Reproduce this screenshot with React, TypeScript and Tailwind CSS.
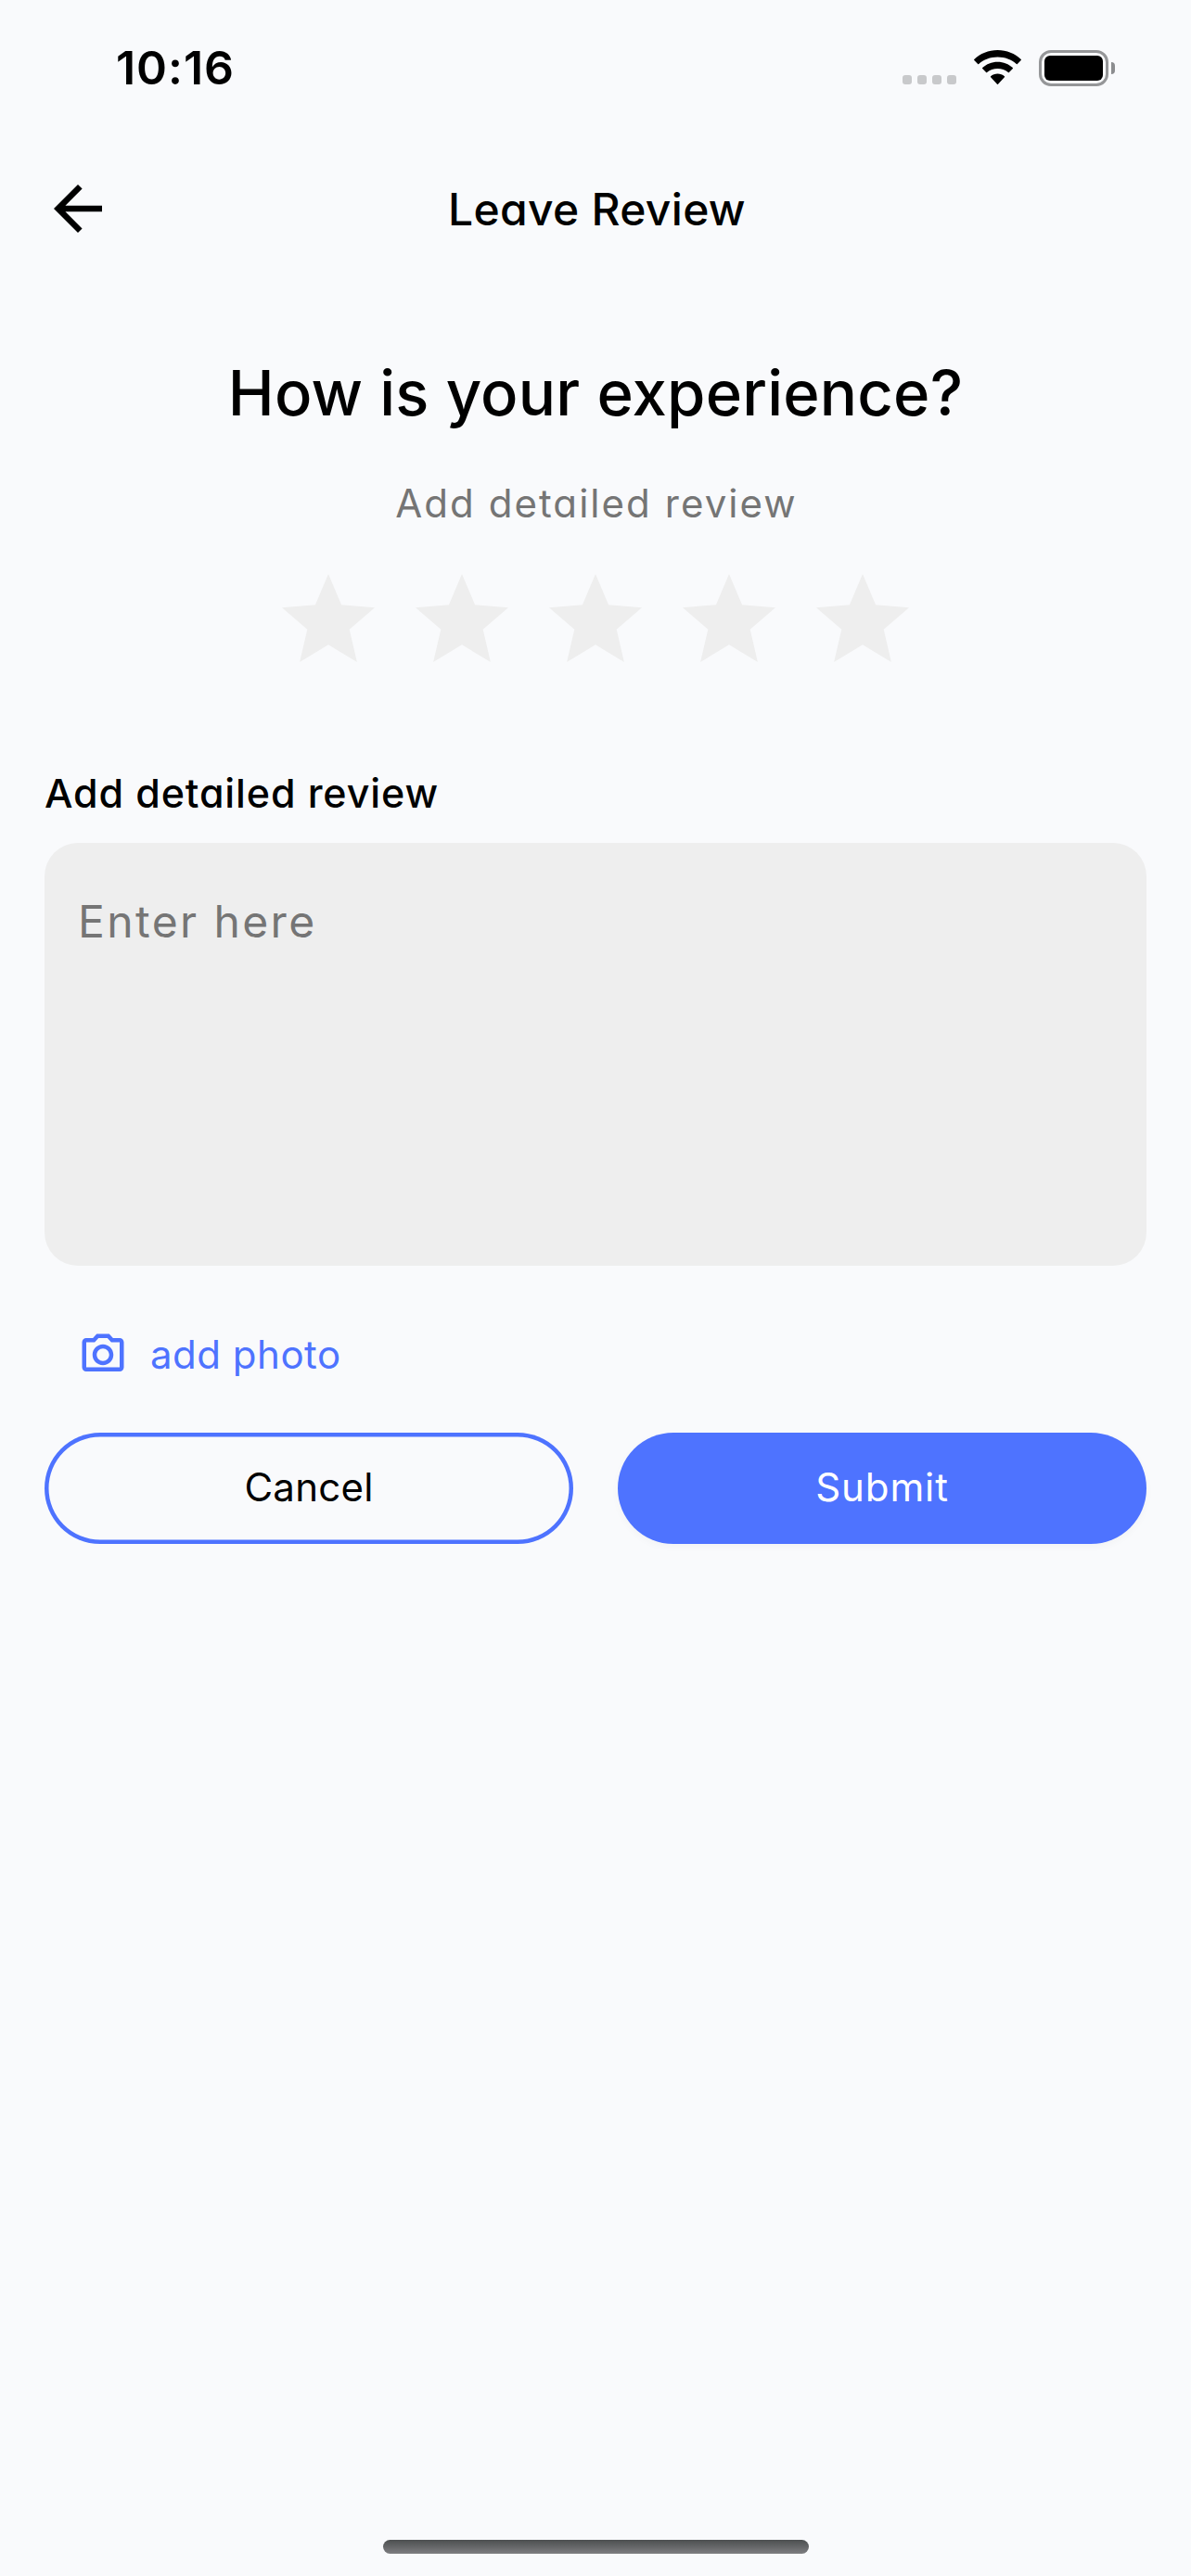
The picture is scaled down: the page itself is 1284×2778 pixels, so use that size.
import { MdArrowBack, MdOutlinePhotoCamera, MdStar } from 'react-icons/md';

const stars = [1, 2, 3, 4, 5];

function StatusBar() {
  return (
    <div className="flex h-[146px] items-center justify-between pr-[82px] pl-[125px]">
      <span className="text-[50px] leading-[60px] font-semibold tracking-[0.95px]">10:16</span>
      <div className="flex h-[39px] items-start">
        <div className="mt-[27px] flex gap-[6px]">
          {[0, 1, 2, 3].map((i) => (
            <span key={i} className="size-[10px] rounded-[3px] bg-[#c8c9cb]" />
          ))}
        </div>
        <svg className="ml-[19px] h-[37px] w-[51px]" viewBox="0 0 51 37">
          <path d="M25.5 0C35.3 0 44.2 3.8 50.7 10Q51.2 10.5 50.7 11L46.8 15Q46.3 15.5 45.8 15C40.5 10.1 33.3 7.4 25.5 7.4S10.5 10.1 5.2 15Q4.7 15.5 4.2 15L.3 11Q-.2 10.5 .3 10C6.8 3.8 15.7 0 25.5 0Z" />
          <path d="M25.5 12.7C31.8 12.7 37.5 15 41.8 19Q42.3 19.5 41.8 20L37.9 24Q37.4 24.5 36.9 24C33.9 21.5 29.9 20 25.5 20S17.1 21.5 14.1 24Q13.6 24.5 13.1 24L9.2 20Q8.7 19.5 9.2 19C13.5 15 19.2 12.7 25.5 12.7Z" />
          <path d="M25.5 25.6C28.3 25.6 30.9 26.5 32.9 28.2Q33.4 28.7 32.9 29.2L26 36.7Q25.5 37.2 25 36.7L18.1 29.2Q17.6 28.7 18.1 28.2C20.1 26.5 22.7 25.6 25.5 25.6Z" />
        </svg>
        <div className="ml-[19px] h-[39px] w-[75px] rounded-[13px] border-3 border-[#959698] p-[3px]">
          <div className="h-full rounded-[6px] bg-black" />
        </div>
        <span className="mt-[13px] ml-[3px] h-[13px] w-[4px] rounded-r-full bg-[#8c8d8f]" />
      </div>
    </div>
  );
}

export default function App() {
  return (
    <div className="relative flex h-[2778px] w-[1284px] flex-col overflow-hidden bg-[#f9fafc] font-['Inter',sans-serif] text-black">
      <StatusBar />

      <header className="grid h-[160px] grid-cols-[1fr_auto_1fr] items-center px-[45px]">
        <button className="mb-[3px] size-[78px]" aria-label="Back">
          <MdArrowBack className="size-[78px]" />
        </button>
        <h1 className="pl-[3px] text-[48px] leading-[60px] font-medium tracking-[0.3px] [font-feature-settings:'cv11']">
          Leave Review
        </h1>
      </header>

      <main className="flex flex-col px-12 [font-feature-settings:'cv11']">
        <h2 className="mt-[68px] text-center text-[67px] leading-[100px] font-medium tracking-[0.19px]">
          How is your experience?
        </h2>
        <p className="mt-[39px] pl-[2px] text-center text-[42px] leading-[60px] tracking-[2.05px] text-[#757575]">
          Add detailed review
        </p>
        <div className="mt-9 flex justify-center gap-6 text-[#eeeeee]">
          {stars.map((n) => (
            <MdStar key={n} className="size-[120px]" />
          ))}
        </div>

        <label className="mt-24 text-[43px] leading-[60px] font-medium tracking-[0.87px]">
          Add detailed review
        </label>
        <div className="mt-6 h-[456px] rounded-[36px] bg-[#eeeeee] px-9 pt-[55px] text-[48px] leading-[60px] tracking-[2.4px] text-[#757575]">
          Enter here
        </div>

        <div className="mt-[69px] flex h-[54px] items-center pl-9 text-[#4e73ff]">
          <MdOutlinePhotoCamera className="size-[54px]" />
          <span className="ml-6 text-[42px] leading-[54px] tracking-[0.5px] [font-feature-settings:normal]">
            add photo
          </span>
        </div>

        <div className="mt-[57px] grid grid-cols-2 gap-12 text-[42px] leading-[60px] [font-feature-settings:normal]">
          <button className="h-[120px] rounded-full pb-[2px] tracking-[0.24px] shadow-[inset_0_0_0_4.5px_#4e73ff]">
            Cancel
          </button>
          <button className="h-[120px] rounded-full bg-[#4e73ff] pb-[2px] tracking-[0.9px] text-white shadow-[0_3px_9px_rgba(0,0,0,0.03)]">
            Submit
          </button>
        </div>
      </main>

      <div className="mx-auto mt-auto mb-6 h-[15px] w-[459px] rounded-full bg-linear-to-b from-[#4c4f50] to-[#7e7e81]" />
    </div>
  );
}
